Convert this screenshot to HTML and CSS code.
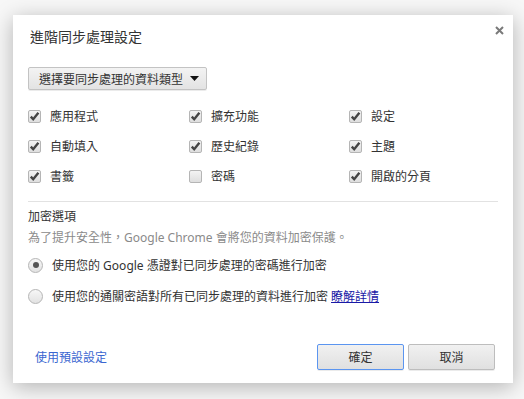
FILE: index.html
```html
<!DOCTYPE html>
<html lang="zh-Hant">
<head>
    <meta charset="UTF-8">
    <title>進階同步處理設定</title>
    <link rel="stylesheet" href="styles.css">
</head>
<body>
    <div class="dialog">
        <div class="dialog-header">
            <h1 class="title">進階同步處理設定</h1>
            <button class="close-btn" aria-label="關閉">
                <svg width="9" height="9" viewBox="0 0 9 9"><path d="M1 1L8 8M8 1L1 8" stroke="#7a7a7a" stroke-width="2"/></svg>
            </button>
        </div>

        <div class="dialog-body">
            <button class="select-btn">
                <span>選擇要同步處理的資料類型</span>
                <svg width="9" height="5" viewBox="0 0 9 5"><path d="M0 0H9L4.5 5Z" fill="#111"/></svg>
            </button>

            <div class="types">
                <label class="check-item"><span class="box checked"></span>應用程式</label>
                <label class="check-item"><span class="box checked"></span>擴充功能</label>
                <label class="check-item"><span class="box checked"></span>設定</label>
                <label class="check-item"><span class="box checked"></span>自動填入</label>
                <label class="check-item"><span class="box checked"></span>歷史紀錄</label>
                <label class="check-item"><span class="box checked"></span>主題</label>
                <label class="check-item"><span class="box checked"></span>書籤</label>
                <label class="check-item"><span class="box"></span>密碼</label>
                <label class="check-item"><span class="box checked"></span>開啟的分頁</label>
            </div>

            <div class="encrypt">
                <div class="section-title">加密選項</div>
                <div class="section-desc">為了提升安全性，Google Chrome 會將您的資料加密保護。</div>
                <label class="radio-item"><span class="radio selected"></span>使用您的 Google 憑證對已同步處理的密碼進行加密</label>
                <label class="radio-item"><span class="radio"></span>使用您的通關密語對所有已同步處理的資料進行加密 <a href="#" class="more-link">瞭解詳情</a></label>
            </div>
        </div>

        <div class="dialog-footer">
            <a href="#" class="defaults-link">使用預設設定</a>
            <div class="actions">
                <button class="btn btn-ok">確定</button>
                <button class="btn">取消</button>
            </div>
        </div>
    </div>
</body>
</html>
```

FILE: styles.css
```css
/* Dialog over a faded page */
body {
    margin: 0;
    padding: 15px 0 0 13px;
    height: 399px;
    box-sizing: border-box;
    background-color: #f7f7f7;
    font-family: "Noto Sans", "Noto Sans CJK TC", sans-serif;
    font-size: 12px;
    color: #333;
}

.dialog {
    width: 500px;
    height: 368px;
    box-sizing: border-box;
    background-color: #fff;
    box-shadow: 0 4px 20px rgba(0, 0, 0, 0.28);
    display: flex;
    flex-direction: column;
}

.dialog-header {
    display: flex;
    justify-content: space-between;
    align-items: flex-start;
    padding: 13px 8px 0 17px;
}

.title {
    margin: 0;
    font-size: 14px;
    font-weight: normal;
    line-height: 18px;
    color: #333;
}

.close-btn {
    border: none;
    background: none;
    padding: 0;
    margin-top: -4px;
    width: 12px;
    height: 12px;
    display: flex;
    align-items: center;
    justify-content: center;
    cursor: pointer;
}

.dialog-body {
    padding: 21px 15px 0 15px;
}

.select-btn {
    width: 179px;
    height: 23px;
    display: flex;
    align-items: center;
    justify-content: space-between;
    padding: 0 7px 0 10px;
    font-family: inherit;
    font-size: 12px;
    color: #333;
    border: 1px solid #c3c3c3;
    border-radius: 2px;
    background: linear-gradient(#f3f3f3, #e3e3e3);
    box-shadow: 0 1px 0 rgba(0, 0, 0, 0.08);
}

.types {
    display: grid;
    grid-template-columns: 161px 160px auto;
    row-gap: 10px;
    margin-top: 16px;
    padding-bottom: 15px;
    border-bottom: 1px solid #e2e2e2;
}

.check-item {
    display: flex;
    align-items: center;
    gap: 9px;
    height: 20px;
}

.box {
    width: 11px;
    height: 11px;
    border: 1px solid #b5b5b5;
    border-radius: 2px;
    background: linear-gradient(#f3f3f3, #dedede);
    flex-shrink: 0;
}

.box.checked {
    background: url("data:image/svg+xml,%3Csvg xmlns='http://www.w3.org/2000/svg' width='11' height='11' viewBox='0 0 11 11'%3E%3Cpath d='M1.8 5.6L4.2 8.2L9.4 1.8' fill='none' stroke='%23444' stroke-width='2.4'/%3E%3C/svg%3E") no-repeat center,
        linear-gradient(#f3f3f3, #dedede);
}

.encrypt {
    padding-top: 7px;
}

.section-title {
    line-height: 16px;
    color: #333;
}

.section-desc {
    margin-top: 5px;
    line-height: 16px;
    color: #8a8a8a;
}

.radio-item {
    display: flex;
    align-items: center;
    gap: 9px;
    height: 20px;
    margin-top: 9px;
}

.radio-item + .radio-item {
    margin-top: 11px;
}

.radio {
    width: 13px;
    height: 13px;
    border: 1px solid #b5b5b5;
    border-radius: 50%;
    background: linear-gradient(#f7f7f7, #e2e2e2);
    flex-shrink: 0;
    display: flex;
    align-items: center;
    justify-content: center;
}

.radio.selected::after {
    content: "";
    width: 6px;
    height: 6px;
    border-radius: 50%;
    background-color: #555;
}

.more-link {
    color: #1a1aa6;
    margin-left: -6px;
}

.dialog-footer {
    margin-top: auto;
    display: flex;
    align-items: center;
    justify-content: space-between;
    padding: 0 18px 13px 22px;
}

.defaults-link {
    color: #3a66d0;
    text-decoration: none;
}

.actions {
    display: flex;
    gap: 4px;
}

.btn {
    width: 87px;
    height: 26px;
    font-family: inherit;
    font-size: 12px;
    color: #333;
    border: 1px solid #bdbdbd;
    border-radius: 2px;
    background: linear-gradient(#f1f1f1, #e0e0e0);
    box-shadow: 0 1px 0 rgba(0, 0, 0, 0.08);
}

.btn-ok {
    border-color: #5b95f0;
}
```
